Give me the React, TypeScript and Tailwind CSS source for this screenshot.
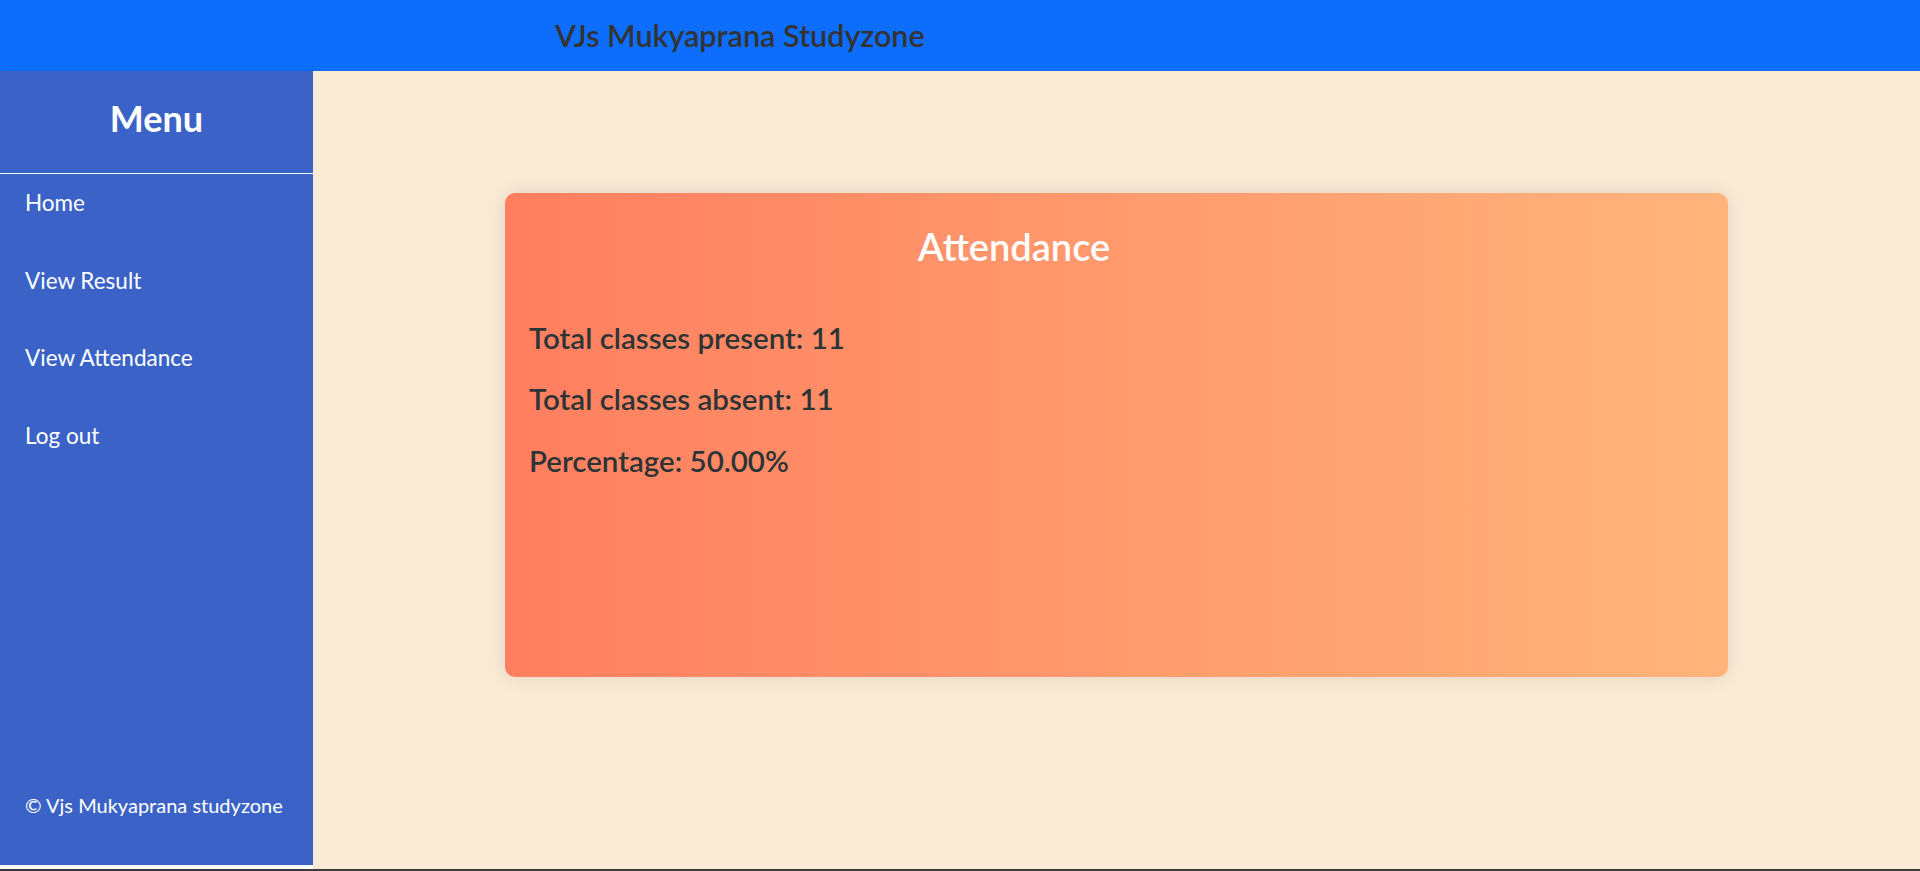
const menuItems = ["Home", "View Result", "View Attendance", "Log out"];

const stats = [
  { label: "Total classes present", value: "11" },
  { label: "Total classes absent", value: "11" },
  { label: "Percentage", value: "50.00%" },
];

export default function App() {
  return (
    <div className="flex h-[871px] flex-col bg-white font-['Lato',sans-serif]">
      <header className="flex h-[71px] shrink-0 items-center bg-[#0d6efd] pl-[555px]">
        <h1 className="text-[30.5px] font-semibold leading-[1.2] text-[#333333]">
          VJs Mukyaprana Studyzone
        </h1>
      </header>

      <div className="flex h-[798px]">
        <aside className="flex h-[794px] w-[313px] shrink-0 flex-col bg-[#3b63c7] text-white shadow-[2px_0_6px_rgba(0,0,0,0.08)]">
          <div className="flex h-[103px] items-center justify-center border-b border-white pb-[7px]">
            <h2 className="text-[36px] font-bold leading-[1.2]">Menu</h2>
          </div>
          <ul className="flex flex-col gap-[47.5px] pl-[25px] pt-[14px]">
            {menuItems.map((item) => (
              <li key={item} className="text-[22.5px] leading-[30px]">
                {item}
              </li>
            ))}
          </ul>
          <p className="mt-auto pb-[48px] pl-[25px] text-[20px] leading-[24px]">
            © Vjs Mukyaprana studyzone
          </p>
        </aside>

        <main className="flex-1 bg-[#faebd7] pt-[122px]">
          <div className="mx-auto h-[484px] w-[1223px] rounded-[10px] bg-linear-to-r from-[#ff7e5f] to-[#feb47b] pt-[31px] shadow-[0_0_20px_rgba(0,0,0,0.1)]">
            <h2 className="pr-[205px] text-center text-[38px] font-semibold leading-[1.2] text-white">
              Attendance
            </h2>
            <div className="mt-[50px] flex flex-col gap-[25.5px] pl-[24px]">
              {stats.map((s) => (
                <p
                  key={s.label}
                  className="text-[29.5px] font-semibold leading-[36px] text-[#2d3436]"
                >
                  {s.label}: {s.value}
                </p>
              ))}
            </div>
          </div>
        </main>
      </div>

      <div className="h-[2px] bg-[#3a3a3a]" />
    </div>
  );
}
